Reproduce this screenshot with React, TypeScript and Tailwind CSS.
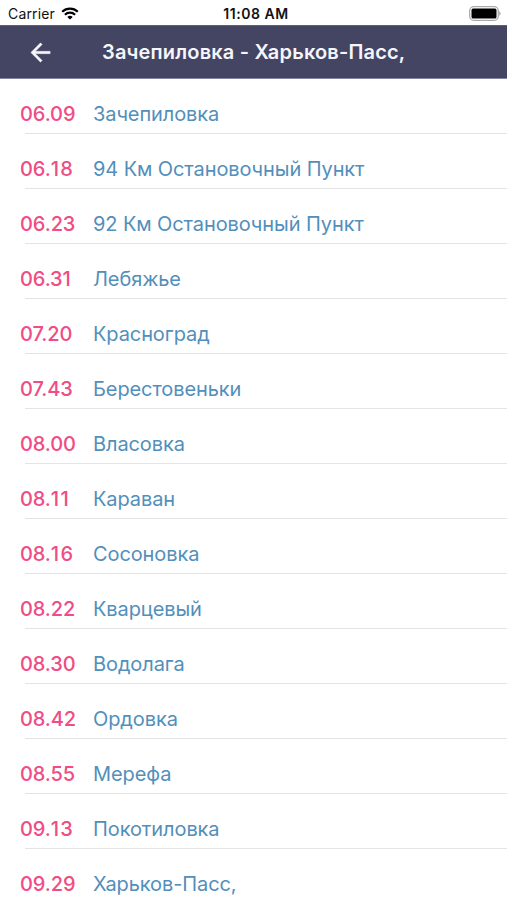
const stops = [
  { time: "06.09", name: "Зачепиловка" },
  { time: "06.18", name: "94 Км Остановочный Пункт" },
  { time: "06.23", name: "92 Км Остановочный Пункт" },
  { time: "06.31", name: "Лебяжье" },
  { time: "07.20", name: "Красноград" },
  { time: "07.43", name: "Берестовеньки" },
  { time: "08.00", name: "Власовка" },
  { time: "08.11", name: "Караван" },
  { time: "08.16", name: "Сосоновка" },
  { time: "08.22", name: "Кварцевый" },
  { time: "08.30", name: "Водолага" },
  { time: "08.42", name: "Ордовка" },
  { time: "08.55", name: "Мерефа" },
  { time: "09.13", name: "Покотиловка" },
  { time: "09.29", name: "Харьков-Пасс," },
];

// the digit 1 is narrow in Inter, so it gets a little room of its own
const Time = ({ value }: { value: string }) => (
  <span className="w-[73px] text-[20px] font-medium tracking-[-0.1px] text-[#f04c85]">
    {value.split("1").map((part, i) => (
      <span key={i}>
        {i > 0 && <span className="tracking-[1.3px]">1</span>}
        {part}
      </span>
    ))}
  </span>
);

const StatusBar = () => (
  <div className="grid grid-cols-3 items-center h-[25px] pt-[2px] pl-2 pr-[6px] text-[14px] text-[#111]">
    <div className="flex items-center gap-1.5">
      <span className="tracking-[0.15px]">Carrier</span>
      <svg className="-mt-px" width="18" height="13" viewBox="0 0 18 13">
        <path d="M9 12.6 6.3 9.9a4 4 0 0 1 5.4 0Z" />
        <path
          d="M1.2 4.8a11.2 11.2 0 0 1 15.6 0M3.9 7.7a7.3 7.3 0 0 1 10.2 0"
          fill="none"
          stroke="black"
          strokeWidth="2.1"
        />
      </svg>
    </div>
    <span className="pl-[3px] font-semibold tracking-[0.55px] text-center whitespace-nowrap">
      11:08 AM
    </span>
    <svg className="justify-self-end -mt-[1px]" width="32" height="15" viewBox="0 0 32 15">
      <rect x="0.7" y="0.7" width="28.6" height="13.6" rx="4" fill="none" stroke="#aaa" strokeWidth="1.3" />
      <rect x="2.5" y="2.5" width="25" height="10" rx="1.5" />
      <path d="M30.3 5.3c1.6.6 1.6 3.8 0 4.4Z" fill="#999" />
    </svg>
  </div>
);

const Header = () => (
  <header className="flex items-center h-[54px] border-y border-t-[#5d5e79] border-b-[#8284a3] bg-[#434563] text-[#f5f5fb]">
    <svg className="ml-[25.5px] shrink-0" width="29" height="29" viewBox="0 0 24 24" fill="currentColor">
      <path
        d="M20 11H7.83l5.59-5.59L12 4l-8 8 8 8 1.41-1.41L7.83 13H20v-2z"
        stroke="currentColor"
        strokeWidth="0.3"
      />
    </svg>
    <h1 className="ml-[47.5px] text-[20px] font-semibold tracking-[0.17px] whitespace-nowrap">
      Зачепиловка - Харьков-Пасс,
    </h1>
  </header>
);

export default function App() {
  return (
    <div className="w-[507px] h-[900px] overflow-hidden bg-white font-['Inter',sans-serif]">
      <StatusBar />
      <Header />
      <ul>
        {stops.map((stop) => (
          <li key={stop.time} className="h-[55px] pl-5">
            <div className="flex items-center h-[54px] pt-[16px]">
              <Time value={stop.time} />
              <span className="text-[20px] tracking-[-0.1px] text-[#528fba] whitespace-nowrap">
                {stop.name}
              </span>
            </div>
            <div className="h-px ml-[5px] bg-[#e4e4e6]" />
          </li>
        ))}
      </ul>
    </div>
  );
}
